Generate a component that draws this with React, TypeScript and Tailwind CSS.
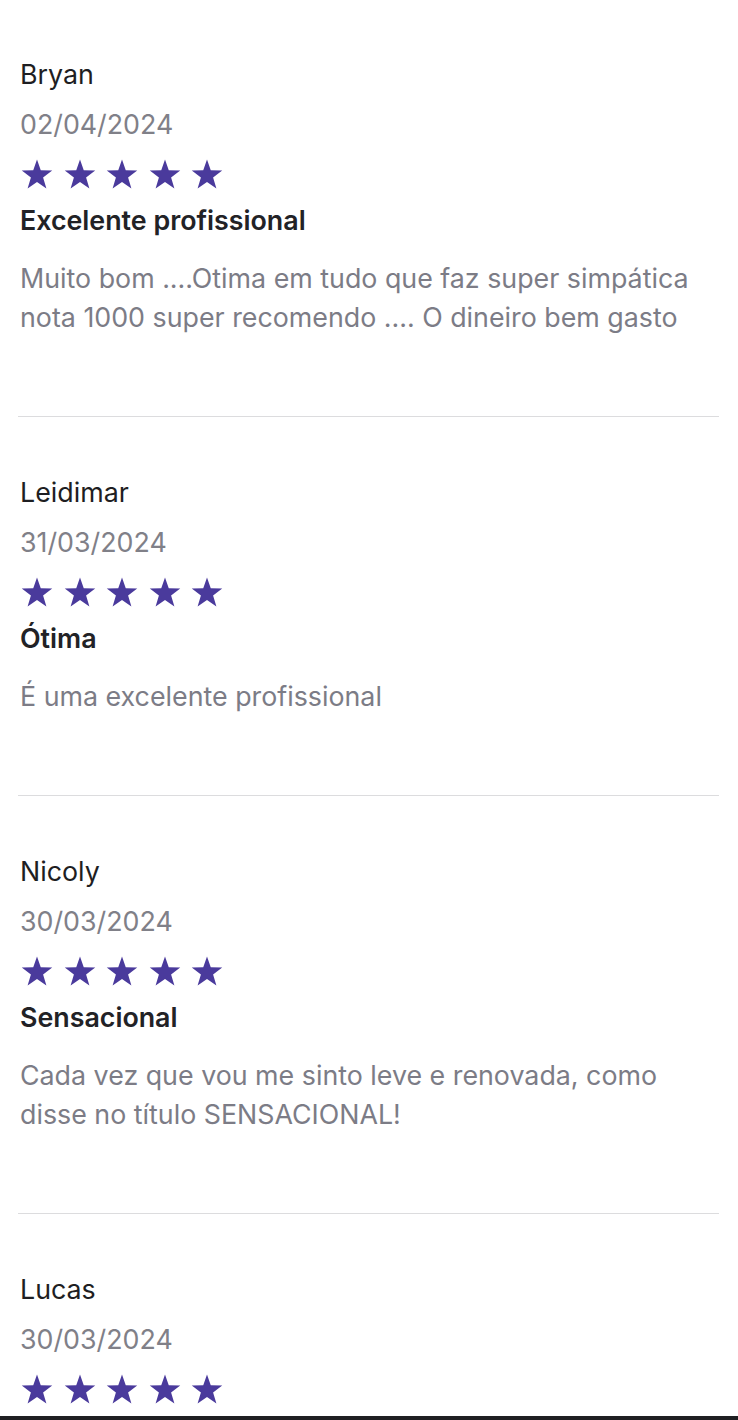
type ReviewData = {
  name: string;
  date: string;
  title?: string;
  text?: string;
};

const reviews: ReviewData[] = [
  {
    name: "Bryan",
    date: "02/04/2024",
    title: "Excelente profissional",
    text: "Muito bom ....Otima em tudo que faz super simpática nota 1000 super recomendo .... O dineiro bem gasto",
  },
  {
    name: "Leidimar",
    date: "31/03/2024",
    title: "Ótima",
    text: "É uma excelente profissional",
  },
  {
    name: "Nicoly",
    date: "30/03/2024",
    title: "Sensacional",
    text: "Cada vez que vou me sinto leve e renovada, como disse no título SENSACIONAL!",
  },
  { name: "Lucas", date: "30/03/2024" },
];

// five-point star, outer radius 16, inner ~6.4
const starPoints = Array.from({ length: 10 }, (_, i) => {
  const r = i % 2 === 0 ? 16 : 6.4;
  const a = ((-90 + i * 36) * Math.PI) / 180;
  return `${(16 + r * Math.cos(a)).toFixed(2)},${(16.5 + r * Math.sin(a)).toFixed(2)}`;
}).join(" ");

function Star() {
  return (
    <svg viewBox="0 0 32 30" className="w-[32px] h-[30px]" aria-hidden>
      <polygon points={starPoints} fill="#4a3a9c" />
    </svg>
  );
}

function Review({ r }: { r: ReviewData }) {
  return (
    <div className="pt-[50px] pb-[79px] border-b border-[#dcdcde]">
      <div className="px-[2px] text-[26.8px] leading-[50px] text-[#1e1e22]">{r.name}</div>
      <div className="px-[2px] text-[26.8px] leading-[50px] text-[#808088]">{r.date}</div>
      <div className="h-[50px] flex items-center gap-[10.5px] px-[3px]">
        {[0, 1, 2, 3, 4].map((i) => (
          <Star key={i} />
        ))}
      </div>
      {r.title && (
        <div className="px-[2px] text-[26.8px] leading-[42px] font-semibold text-[#222226]">{r.title}</div>
      )}
      {r.text && (
        <p className="mt-[18px] px-[2px] text-[26.8px] leading-[39px] text-[#7c7c86]">{r.text}</p>
      )}
    </div>
  );
}

export default function App() {
  return (
    <div
      className="h-[1420px] flex flex-col bg-white overflow-hidden"
      style={{ fontFamily: "Inter, 'Noto Sans', sans-serif" }}
    >
      <div className="flex-1 overflow-hidden">
        <div className="-mt-[1px] pl-[18px] pr-[19px]">
          {reviews.map((r) => (
            <Review key={r.name} r={r} />
          ))}
        </div>
      </div>
      <div className="h-[4px] bg-[#1f1f22]" />
    </div>
  );
}
